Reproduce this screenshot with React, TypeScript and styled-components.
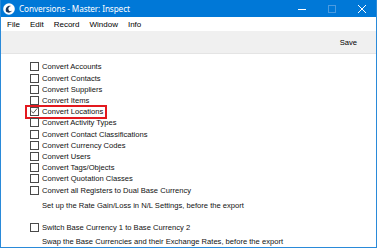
import styled, { createGlobalStyle } from 'styled-components';

const GlobalStyle = createGlobalStyle`
  html, body {
    margin: 0;
    padding: 0;
    background: #ffffff;
  }
  body {
    font-family: "Liberation Sans", Arial, sans-serif;
  }
`;

// STYLES
const Window = styled.div`
  width: 377px;
  height: 248px;
  box-sizing: border-box;
  display: flex;
  flex-direction: column;
  border: 1px solid #2a8ad9;
  border-top: none;
  background: #ffffff;
  overflow: hidden;
`;

const TitleBar = styled.div`
  height: 17px;
  margin: 0 -1px;
  background: #0078d7;
  display: flex;
  align-items: center;
  color: #ffffff;
  flex-shrink: 0;
`;

const AppIcon = styled.svg`
  margin-left: 3px;
  width: 12px;
  height: 12px;
`;

const Title = styled.span`
  margin-left: 4px;
  font-family: "Noto Sans", "Liberation Sans", sans-serif;
  font-size: 8.2px;
  letter-spacing: -0.1px;
  flex: 1;
`;

const Control = styled.div`
  width: 30px;
  height: 17px;
  display: flex;
  align-items: center;
  justify-content: center;
`;

const MenuBar = styled.div`
  height: 14px;
  display: flex;
  align-items: center;
  padding-left: 6px;
  gap: 10px;
  font-size: 8px;
  color: #000000;
  flex-shrink: 0;
`;

const Toolbar = styled.div`
  height: 22px;
  background: #f0f0f0;
  border-bottom: 1px solid #e4e4e4;
  display: flex;
  align-items: center;
  justify-content: flex-end;
  padding-right: 19px;
  font-size: 7.6px;
  color: #000000;
  flex-shrink: 0;
`;

const Content = styled.div`
  padding: 7.4px 0 0 29px;
  display: flex;
  flex-direction: column;
  font-size: 7.6px;
  color: #111111;
`;

const Row = styled.div<{ $gap?: number }>`
  position: relative;
  height: 11.2px;
  display: flex;
  align-items: center;
  gap: 3px;
  margin-top: ${(p) => p.$gap || 0}px;
`;

const Box = styled.span`
  width: 9px;
  height: 9px;
  box-sizing: border-box;
  border: 1px solid #4a4a4a;
  background: #ffffff;
  display: flex;
  align-items: center;
  justify-content: center;
`;

const Note = styled.div<{ $gap: number }>`
  height: 11.2px;
  line-height: 11.2px;
  padding-left: 12px;
  margin-top: ${(p) => p.$gap}px;
`;

const Highlight = styled.span`
  position: absolute;
  left: -5px;
  top: -1px;
  width: 82px;
  height: 14px;
  box-sizing: border-box;
  border: 2px solid #e3191f;
  pointer-events: none;
`;

const items = [
  'Convert Accounts',
  'Convert Contacts',
  'Convert Suppliers',
  'Convert Items',
  'Convert Locations',
  'Convert Activity Types',
  'Convert Contact Classifications',
  'Convert Currency Codes',
  'Convert Users',
  'Convert Tags/Objects',
  'Convert Quotation Classes',
  'Convert all Registers to Dual Base Currency',
];

function Check({ checked }: { checked?: boolean }) {
  return (
    <Box>
      {checked && (
        <svg width="9" height="9" viewBox="0 0 9 9">
          <polyline points="0.5,4 3,6.5 8,0.5" fill="none" stroke="#222" strokeWidth="1" />
        </svg>
      )}
    </Box>
  );
}

export default function App() {
  return (
    <>
      <GlobalStyle />
      <Window>
        <TitleBar>
          <AppIcon viewBox="0 0 12 12">
            <circle cx="6" cy="6" r="5.8" fill="#ffffff" />
            <path d="M3 8.5 C2 5 4.5 2.2 8 3 C6 3.4 4.8 5 5.6 7 C6.2 8.4 8 8.6 9.2 7.6 C8.2 9.8 4.6 10.4 3 8.5 Z" fill="#1d3557" />
          </AppIcon>
          <Title>Conversions - Master: Inspect</Title>
          <Control>
            <svg width="10" height="10" viewBox="0 0 10 10">
              <line x1="1" y1="5.5" x2="9" y2="5.5" stroke="#ffffff" strokeWidth="1" />
            </svg>
          </Control>
          <Control>
            <svg width="10" height="10" viewBox="0 0 10 10">
              <rect x="1.5" y="1.5" width="7" height="7" fill="none" stroke="#4b9be0" strokeWidth="1" />
            </svg>
          </Control>
          <Control>
            <svg width="10" height="10" viewBox="0 0 10 10">
              <line x1="1" y1="1" x2="9" y2="9" stroke="#ffffff" strokeWidth="1" />
              <line x1="9" y1="1" x2="1" y2="9" stroke="#ffffff" strokeWidth="1" />
            </svg>
          </Control>
        </TitleBar>
        <MenuBar>
          <span>File</span>
          <span>Edit</span>
          <span>Record</span>
          <span>Window</span>
          <span>Info</span>
        </MenuBar>
        <Toolbar>Save</Toolbar>
        <Content>
          {items.map((label) => (
            <Row key={label}>
              <Check checked={label === 'Convert Locations'} />
              <span>{label}</span>
              {label === 'Convert Locations' && <Highlight />}
            </Row>
          ))}
          <Note $gap={4}>Set up the Rate Gain/Loss in N/L Settings, before the export</Note>
          <Row $gap={11}>
            <Check />
            <span>Switch Base Currency 1 to Base Currency 2</span>
          </Row>
          <Note $gap={3}>Swap the Base Currencies and their Exchange Rates, before the export</Note>
        </Content>
      </Window>
    </>
  );
}
